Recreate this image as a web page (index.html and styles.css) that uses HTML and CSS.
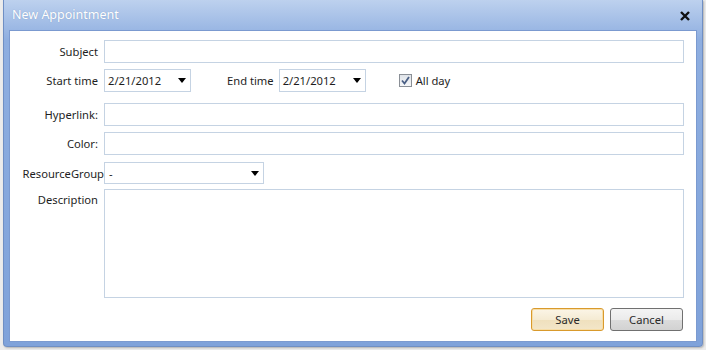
FILE: index.html
```html
<!DOCTYPE html>
<html lang="en">
<head>
    <meta charset="UTF-8">
    <title>New Appointment</title>
    <link rel="stylesheet" href="styles.css">
</head>
<body>
    <!-- Appointment dialog -->
    <div class="dialog">
        <div class="title-bar">
            <span class="title">New Appointment</span>
            <span class="close">
                <svg width="10" height="10" viewBox="0 0 10 10"><path d="M1 1 L9 9 M9 1 L1 9" stroke="#111" stroke-width="2.4"/></svg>
            </span>
        </div>

        <div class="content">
            <div class="row row-subject">
                <label class="field-label">Subject</label>
                <div class="input wide"></div>
            </div>

            <div class="row row-time">
                <label class="field-label">Start time</label>
                <div class="input date">2/21/2012<span class="arrow"></span></div>
                <label class="end-label">End time</label>
                <div class="input date">2/21/2012<span class="arrow"></span></div>
                <span class="checkbox">
                    <svg width="9" height="9" viewBox="0 0 9 9"><path d="M1 4.5 L3.5 7.5 L8 1" fill="none" stroke="#4a5f85" stroke-width="1.8"/></svg>
                </span>
                <span class="check-label">All day</span>
            </div>

            <div class="row row-link">
                <label class="field-label">Hyperlink:</label>
                <div class="input wide"></div>
            </div>

            <div class="row row-color">
                <label class="field-label">Color:</label>
                <div class="input wide"></div>
            </div>

            <div class="row row-group">
                <label class="field-label">ResourceGroup</label>
                <div class="input select">-<span class="arrow"></span></div>
            </div>

            <div class="row row-desc">
                <label class="field-label">Description</label>
                <div class="input wide textarea"></div>
            </div>

            <div class="buttons">
                <button class="btn btn-save">Save</button>
                <button class="btn">Cancel</button>
            </div>
        </div>
    </div>
</body>
</html>
```

FILE: styles.css
```css
body {
    margin: 0;
    width: 706px;
    height: 350px;
    background: #ececec;
    font-family: 'Noto Sans', 'Open Sans', sans-serif;
    font-size: 11.2px;
    color: #1e1e1e;
    overflow: hidden;
}

.dialog {
    margin: 0 0 0 3px;
    width: 700px;
    height: 347px;
    box-sizing: border-box;
    background: linear-gradient(#bdd1ee, #8eaee0 40px, #7fa2da);
    border: 1px solid #6f8fc4;
    border-top: none;
    border-radius: 0 0 4px 4px;
    padding: 0 5px 4px 5px;
    display: flex;
    flex-direction: column;
    box-shadow: 1px 1px 2px rgba(0, 0, 0, 0.25);
}

.title-bar {
    height: 30px;
    display: flex;
    align-items: center;
    justify-content: space-between;
    flex-shrink: 0;
}

.title {
    color: #ffffff;
    font-size: 12.5px;
    padding-left: 3px;
    margin-top: -2px;
    text-shadow: 0 0 1px rgba(60, 90, 140, 0.4);
}

.close {
    display: flex;
    padding-right: 7px;
    margin-top: 1px;
}

.content {
    flex: 1;
    background: #ffffff;
    border: 1px solid #7b9ad0;
    padding: 9px 0 0 0;
    display: flex;
    flex-direction: column;
}

.row {
    display: flex;
    align-items: center;
}

.field-label {
    width: 88px;
    text-align: right;
    padding-right: 6px;
    white-space: nowrap;
    flex-shrink: 0;
}

.row-group .field-label {
    direction: rtl;
    padding-right: 0;
    width: 94px;
}

.input {
    height: 23px;
    box-sizing: border-box;
    border: 1px solid #c5d3e3;
    display: flex;
    align-items: center;
    padding-left: 3px;
    position: relative;
}

.wide {
    width: 580px;
}

.date {
    width: 87px;
}

.select {
    width: 160px;
    height: 22px;
    padding-left: 4px;
}

.arrow {
    position: absolute;
    right: 4px;
    top: 8px;
    width: 0;
    height: 0;
    border-left: 4px solid transparent;
    border-right: 4px solid transparent;
    border-top: 5px solid #000;
}

.end-label {
    margin-left: 36px;
    margin-right: 5px;
}

.checkbox {
    margin-left: 33px;
    width: 13px;
    height: 13px;
    box-sizing: border-box;
    border: 1px solid #8a8f96;
    background: linear-gradient(#dfe3e8, #f6f7f9);
    display: flex;
    align-items: center;
    justify-content: center;
}

.check-label {
    margin-left: 4px;
}

.row-time {
    margin-top: 6px;
}

.row-link {
    margin-top: 11px;
}

.row-color {
    margin-top: 6px;
}

.row-group {
    margin-top: 7px;
}

.row-desc {
    margin-top: 5px;
    align-items: flex-start;
}

.row-desc .field-label {
    padding-top: 3px;
}

.textarea {
    height: 109px;
}

.buttons {
    display: flex;
    justify-content: flex-end;
    gap: 6px;
    margin-top: 10px;
    padding-right: 13px;
}

.btn {
    width: 73px;
    height: 23px;
    font-family: 'Noto Sans', 'Open Sans', sans-serif;
    font-size: 11.2px;
    color: #2a2a2a;
    border: 1px solid #707070;
    border-radius: 3px;
    background: linear-gradient(#f4f4f4, #ebebeb 50%, #dcdcdc 51%, #d2d2d2);
    padding: 0;
}

.btn-save {
    border-color: #d99a2c;
    background: linear-gradient(#fbf5e7, #f5ebd3 50%, #efe0bd 51%, #f3e6c9);
    box-shadow: inset 0 0 0 1px #f7dda6;
}
```
